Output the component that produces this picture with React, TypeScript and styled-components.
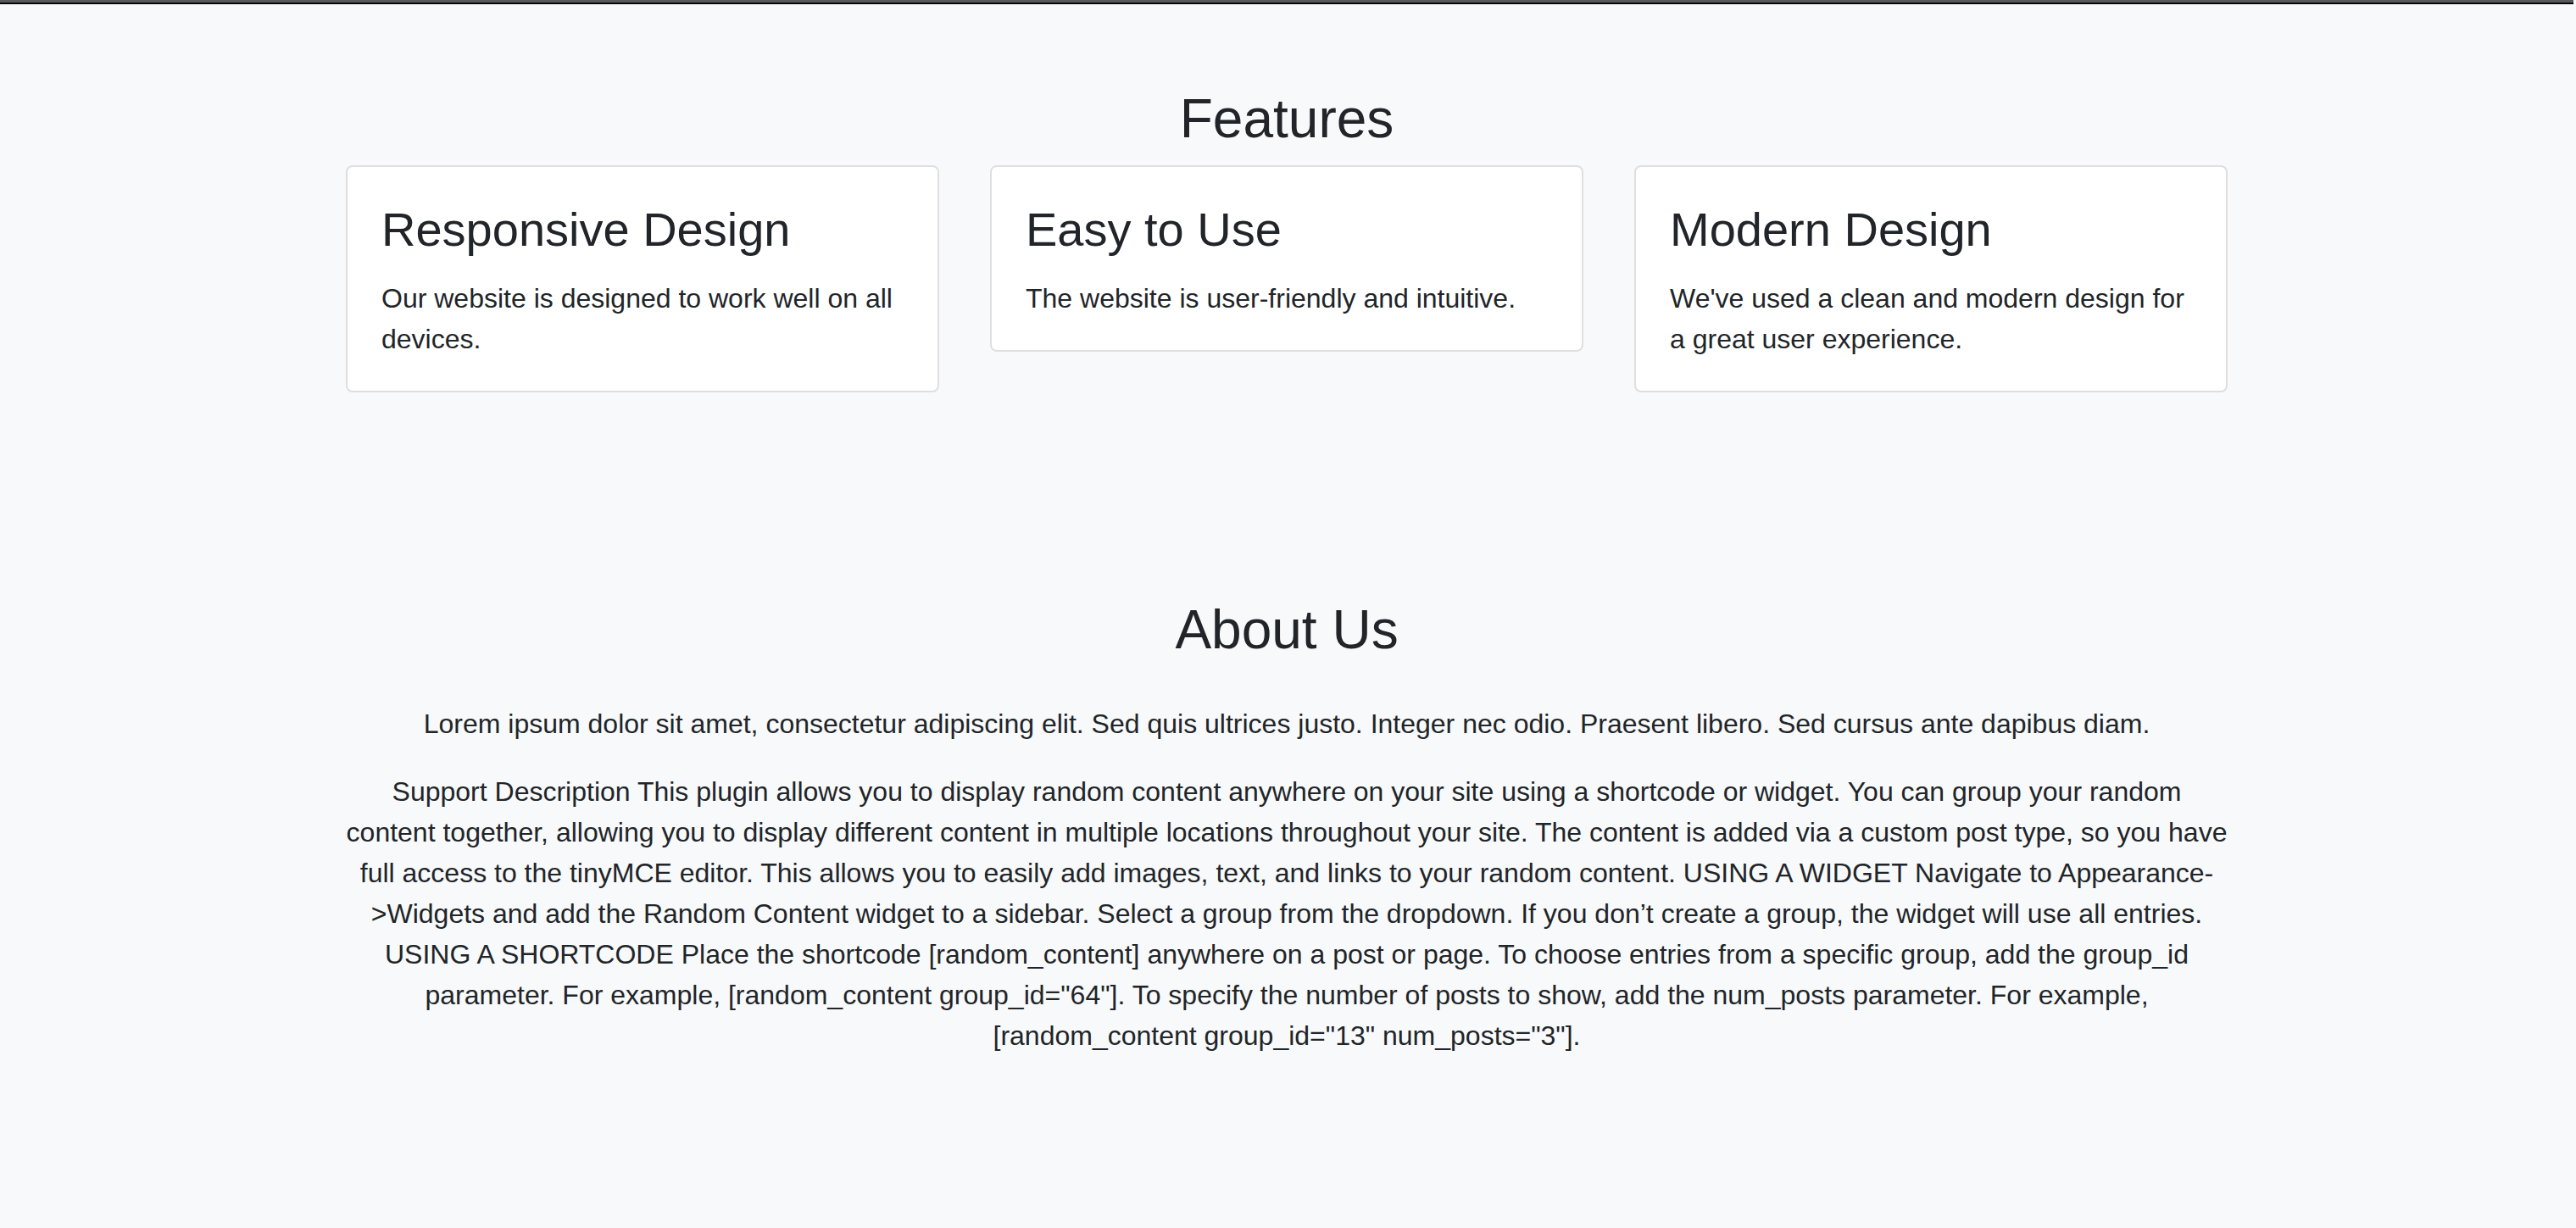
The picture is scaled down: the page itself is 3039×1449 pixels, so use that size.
import React from "react";
import styled, { createGlobalStyle } from "styled-components";

const GlobalStyle = createGlobalStyle`
  html, body {
    margin: 0;
    padding: 0;
    background: #f8f9fa;
  }
  body {
    font-family: "Liberation Sans", Arial, Helvetica, sans-serif;
    color: #212529;
  }
  * { box-sizing: border-box; }
`;

const Page = styled.div`
  min-height: 100vh;
  background: #f8f9fa;
  padding-right: 3px;
`;

const TopStrip = styled.div`
  height: 5px;
  border-top: 3px solid #5a5a5a;
  background: #03090a;
`;

const Section = styled.section<{ $top: number }>`
  padding-top: ${(p) => p.$top}px;
`;

const Container = styled.div`
  width: 2220px;
  margin: 0 auto;
`;

const SectionTitle = styled.h2<{ $gap: number }>`
  margin: 0 0 ${(p) => p.$gap}px;
  font-size: 64px;
  line-height: 76.8px;
  font-weight: 500;
  text-align: center;
  color: #212529;
`;

const CardGrid = styled.div`
  display: grid;
  grid-template-columns: repeat(3, 1fr);
  column-gap: 60px;
  align-items: start;
`;

const Card = styled.div`
  background: #ffffff;
  border: 2px solid #dfdfdf;
  border-radius: 8px;
  padding: 40px 40px 37px;
`;

const CardTitle = styled.h3`
  margin: 0 0 24px;
  font-size: 56px;
  line-height: 67.2px;
  font-weight: 500;
  color: #212529;
`;

const CardText = styled.p`
  margin: 0;
  font-size: 32px;
  line-height: 48px;
  color: #212529;
`;

const AboutText = styled.p<{ $gap: number }>`
  margin: 0 0 ${(p) => p.$gap}px;
  font-size: 32px;
  line-height: 48px;
  text-align: center;
  color: #212529;
`;

const features = [
  {
    title: "Responsive Design",
    text: "Our website is designed to work well on all devices.",
  },
  {
    title: "Easy to Use",
    text: "The website is user-friendly and intuitive.",
  },
  {
    title: "Modern Design",
    text: "We've used a clean and modern design for a great user experience.",
  },
];

const support =
  'Support Description This plugin allows you to display random content anywhere on your site using a shortcode or widget. You can group your random content together, allowing you to display different content in multiple locations throughout your site. The content is added via a custom post type, so you have full access to the tinyMCE editor. This allows you to easily add images, text, and links to your random content. USING A WIDGET Navigate to Appearance->Widgets and add the Random Content widget to a sidebar. Select a group from the dropdown. If you don\u2019t create a group, the widget will use all entries. USING A SHORTCODE Place the shortcode [random_content] anywhere on a post or page. To choose entries from a specific group, add the group_id parameter. For example, [random_content group_id="64"]. To specify the number of posts to show, add the num_posts parameter. For example, [random_content group_id="13" num_posts="3"].';

export default function App() {
  return (
    <>
      <GlobalStyle />
      <Page>
        <TopStrip />
        <Section $top={97}>
          <Container>
            <SectionTitle $gap={16}>Features</SectionTitle>
            <CardGrid>
              {features.map((f) => (
                <Card key={f.title}>
                  <CardTitle>{f.title}</CardTitle>
                  <CardText>{f.text}</CardText>
                </Card>
              ))}
            </CardGrid>
          </Container>
        </Section>
        <Section $top={242}>
          <Container>
            <SectionTitle $gap={48}>About Us</SectionTitle>
            <AboutText $gap={32}>
              Lorem ipsum dolor sit amet, consectetur adipiscing elit. Sed quis
              ultrices justo. Integer nec odio. Praesent libero. Sed cursus ante
              dapibus diam.
            </AboutText>
            <AboutText $gap={32}>{support}</AboutText>
          </Container>
        </Section>
      </Page>
    </>
  );
}
